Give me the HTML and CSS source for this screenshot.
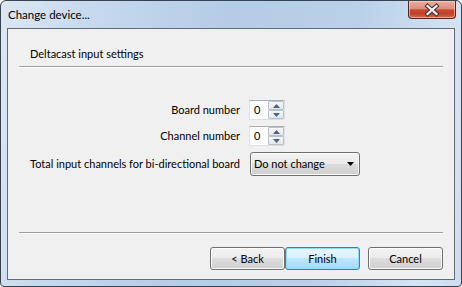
FILE: index.html
```html
<!DOCTYPE html>
<html>
<head>
<meta charset="utf-8">
<link rel="stylesheet" href="styles.css">
</head>
<body>
<div class="window">
  <div class="titlebar">
    <span class="title">Change device...</span>
    <div class="close">
      <svg width="46" height="16" viewBox="0 0 46 16">
        <path d="M18.5 4 L27.5 12 M27.5 4 L18.5 12" stroke="#4a2a24" stroke-width="4.2" stroke-linecap="square" fill="none"/>
        <path d="M18.5 4 L27.5 12 M27.5 4 L18.5 12" stroke="#ffffff" stroke-width="2.2" stroke-linecap="square" fill="none"/>
      </svg>
    </div>
  </div>
  <div class="client">
    <div class="header">Deltacast input settings</div>
    <div class="rule"></div>
    <div class="form">
      <label class="lbl">Board number</label>
      <div class="spin">
        <span class="val">0</span>
        <div class="arrows">
          <span class="arrow"><svg width="7" height="4" viewBox="0 0 7 4"><path d="M0 4 L3.5 0 L7 4 Z" fill="#4d6185"/></svg></span>
          <span class="arrow"><svg width="7" height="4" viewBox="0 0 7 4"><path d="M0 0 L3.5 4 L7 0 Z" fill="#4d6185"/></svg></span>
        </div>
      </div>
      <label class="lbl">Channel number</label>
      <div class="spin">
        <span class="val">0</span>
        <div class="arrows">
          <span class="arrow"><svg width="7" height="4" viewBox="0 0 7 4"><path d="M0 4 L3.5 0 L7 4 Z" fill="#4d6185"/></svg></span>
          <span class="arrow"><svg width="7" height="4" viewBox="0 0 7 4"><path d="M0 0 L3.5 4 L7 0 Z" fill="#4d6185"/></svg></span>
        </div>
      </div>
      <label class="lbl">Total input channels for bi-directional board</label>
      <div class="combo">
        <span>Do not change</span>
        <svg width="7" height="4" viewBox="0 0 7 4"><path d="M0 0 L7 0 L3.5 4 Z" fill="#000"/></svg>
      </div>
    </div>
    <div class="rule bottom"></div>
    <div class="buttons">
      <div class="btn">&lt; Back</div>
      <div class="btn default">Finish</div>
      <div class="btn cancel">Cancel</div>
    </div>
  </div>
</div>
</body>
</html>
```
FILE: styles.css
```css
html, body {
  margin: 0;
  padding: 0;
}
body {
  width: 462px;
  height: 287px;
  overflow: hidden;
  font-family: Lato, "Noto Sans", sans-serif;
  font-size: 11px;
  color: #000;
  background: #fff;
}
.window {
  box-sizing: border-box;
  width: 462px;
  height: 287px;
  border: 1px solid #39434f;
  border-radius: 6px 6px 4px 4px;
  background: linear-gradient(100deg, #dce7f3 0%, #c6d9ed 18%, #b5cce6 45%, #b9d0e8 70%, #d6e4f2 92%, #cddcee 100%);
  display: flex;
  flex-direction: column;
  padding: 0 6px 6px;
}
.titlebar {
  height: 28px;
  display: flex;
  justify-content: space-between;
  align-items: flex-start;
}
.title {
  padding-top: 7px;
  padding-left: 1px;
  line-height: 14px;
  font-size: 11.5px;
  color: #000;
}
.close {
  box-sizing: border-box;
  width: 48px;
  height: 18px;
  margin-right: -1px;
  border: 1px solid #55241b;
  border-top: none;
  border-radius: 0 0 4px 4px;
  background: linear-gradient(#e9ada0 0%, #dc8f7d 45%, #c64a31 52%, #c0412a 75%, #d56a4f 100%);
  box-shadow: inset 0 0 0 1px rgba(255, 220, 210, 0.55);
  display: flex;
  align-items: center;
  justify-content: center;
}
.client {
  flex: 1;
  display: flex;
  flex-direction: column;
  background: #f0f0f0;
  border: 1px solid #626a75;
}
.header {
  height: 37px;
  box-sizing: border-box;
  padding: 18px 0 0 22px;
  line-height: 14px;
}
.rule {
  height: 1px;
  margin: 0 11px;
  background: #a0a0a0;
  border-bottom: 1px solid #ffffff;
}
.rule.bottom {
  margin-top: auto;
}
.form {
  margin-top: 32px;
  padding-left: 22px;
  display: grid;
  grid-template-columns: 210px auto;
  grid-template-rows: 20px 20px 24px;
  column-gap: 9px;
  row-gap: 6px;
  justify-content: start;
  align-items: center;
  margin-bottom: 56px;
}
.form > :nth-child(5), .form > :nth-child(6) {
  margin-top: -1px;
}
.lbl {
  text-align: right;
  white-space: nowrap;
  line-height: 14px;
}
.spin {
  box-sizing: border-box;
  width: 36px;
  height: 20px;
  display: flex;
  background: #fff;
  border: 1px solid #dcdfe5;
  border-top-color: #abadb3;
}
.val {
  flex: 1;
  padding-left: 4px;
  line-height: 18px;
}
.arrows {
  width: 16px;
  display: flex;
  flex-direction: column;
}
.arrow {
  flex: 1;
  box-sizing: border-box;
  border: 1px solid #b9c0ca;
  border-radius: 1px;
  background: linear-gradient(#f6f7f9, #e3e7ec);
  display: flex;
  align-items: center;
  justify-content: center;
}
.combo {
  box-sizing: border-box;
  width: 110px;
  height: 24px;
  margin-left: 1px;
  padding: 0 5px 0 3px;
  display: flex;
  align-items: center;
  justify-content: space-between;
  border: 1px solid #707070;
  border-radius: 3px;
  background: linear-gradient(#f2f2f2 0%, #ebebeb 50%, #dddddd 50%, #cfcfcf 100%);
  box-shadow: inset 0 0 0 1px #fbfbfb;
}
.buttons {
  margin-top: 13px;
  margin-bottom: 9px;
  padding-right: 11px;
  display: flex;
  justify-content: flex-end;
}
.btn {
  box-sizing: border-box;
  width: 75px;
  height: 23px;
  display: flex;
  align-items: center;
  justify-content: center;
  border: 1px solid #707070;
  border-radius: 3px;
  background: linear-gradient(#f2f2f2 0%, #ebebeb 50%, #dddddd 50%, #cfcfcf 100%);
  box-shadow: inset 0 0 0 1px #fbfbfb;
}
.btn.default {
  border-color: #3c7fb1;
  background: linear-gradient(#eaf6fd 0%, #d9f0fc 50%, #bee6fd 50%, #a7d9f5 100%);
  box-shadow: inset 0 0 0 1px #8fdcfb;
}
.btn.cancel {
  margin-left: 8px;
}
```
